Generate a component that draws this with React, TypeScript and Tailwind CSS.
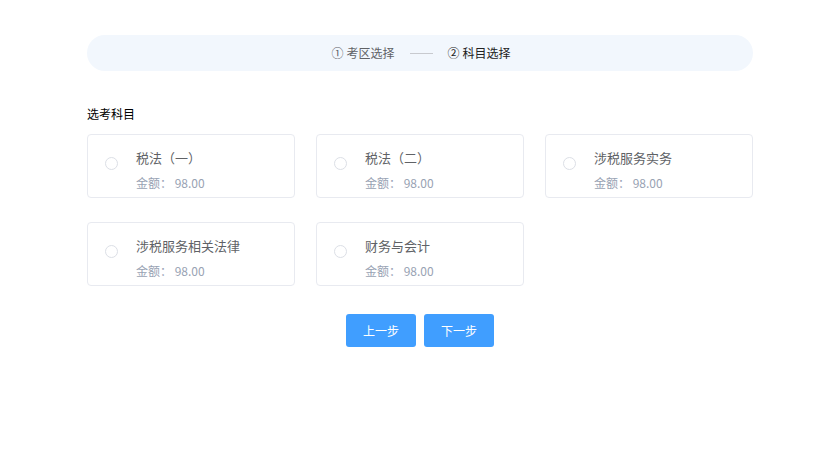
import React from "react";

const subjects = [
  { name: "税法（一）", amount: "98.00" },
  { name: "税法（二）", amount: "98.00" },
  { name: "涉税服务实务", amount: "98.00" },
  { name: "涉税服务相关法律", amount: "98.00" },
  { name: "财务与会计", amount: "98.00" },
];

export default function App() {
  return (
    <div
      className="w-[820px] h-[455px] bg-white"
      style={{ fontFamily: '"Noto Sans CJK SC", "Noto Sans", sans-serif' }}
    >
      <div className="ml-[87px] w-[666px] pt-[35px]">
        <div className="h-[36px] rounded-full bg-[#f2f7fd] flex items-center justify-center text-[12px]">
          <span className="text-[#606266] flex items-center ml-[2px]">
            <span className="mr-[3px]">①</span>考区选择
          </span>
          <span className="mx-[15px] w-[23px] h-[1px] bg-[#c8cacf]" />
          <span className="text-[#222] flex items-center">
            <span className="mr-[3px]">②</span>科目选择
          </span>
        </div>
        <div className="mt-[34px] text-[12px] text-black leading-[18px]">选考科目</div>
        <div className="mt-[11px] grid grid-cols-3 gap-x-[21px] gap-y-[24px]">
          {subjects.map((s) => (
            <div
              key={s.name}
              className="h-[64px] border border-[#e8eaf0] rounded-[4px] flex items-start"
            >
              <span className="ml-[17px] mt-[22px] w-[13px] h-[13px] rounded-full border border-[#dcdfe6] bg-white shrink-0" />
              <div className="ml-[18px] pt-[14px] flex flex-col">
                <span className="text-[13px] text-[#606266] leading-[18px]">{s.name}</span>
                <span className="mt-[8px] text-[12px] text-[#98a2b3] leading-[16px]">
                  金额： {s.amount}
                </span>
              </div>
            </div>
          ))}
        </div>
        <div className="mt-[28px] flex justify-center gap-[8px]">
          <button className="w-[70px] h-[33px] rounded-[3px] bg-[#409eff] text-white text-[12px]">
            上一步
          </button>
          <button className="w-[70px] h-[33px] rounded-[3px] bg-[#409eff] text-white text-[12px]">
            下一步
          </button>
        </div>
      </div>
    </div>
  );
}
